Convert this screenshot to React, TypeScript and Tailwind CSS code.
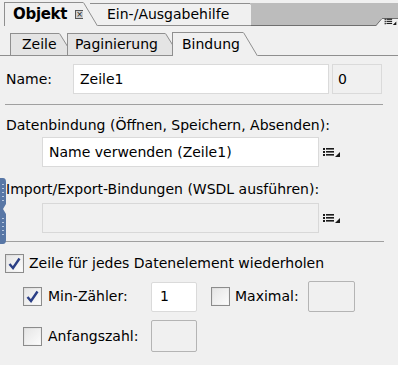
import React from "react";

const ListIcon = () => (
  <svg width="18" height="10" viewBox="0 0 18 10" className="shrink-0">
    <rect x="0" y="1" width="2" height="2" fill="#1a1a1a" />
    <rect x="0" y="4" width="2" height="2" fill="#1a1a1a" />
    <rect x="0" y="7" width="2" height="2" fill="#1a1a1a" />
    <rect x="3" y="1" width="8" height="1.6" fill="#1a1a1a" />
    <rect x="3" y="4" width="8" height="1.6" fill="#1a1a1a" />
    <rect x="3" y="7" width="8" height="1.6" fill="#1a1a1a" />
    <polygon points="17,5 17,10 12,10" fill="#1a1a1a" />
  </svg>
);

const Slant = ({ h, fill, bottom }: { h: number; fill: string; bottom?: boolean }) => (
  <svg width="15" height={h} viewBox={`0 0 15 ${h}`} className="shrink-0 -ml-px">
    <polygon points={`0,0 1,0 15,${h} 0,${h}`} fill={fill} />
    <line x1="0.5" y1="0.5" x2="14.5" y2={h} stroke="#8f8f8f" strokeWidth="1" />
    {bottom && <line x1="0" y1={h - 0.5} x2="15" y2={h - 0.5} stroke="#8f8f8f" />}
  </svg>
);

const Check = ({ checked }: { checked?: boolean }) => (
  <div className="w-[19px] h-[19px] shrink-0 border border-[#8c8c8c] bg-gradient-to-br from-[#dcdcdc] to-[#f8f8f8] flex items-center justify-center">
    <div className="w-[15px] h-[15px] bg-gradient-to-br from-[#e6e6e6] to-[#fbfbfb] flex items-center justify-center">
      {checked && (
        <svg width="13" height="13" viewBox="0 0 13 13">
          <path d="M1.5 7 L5 11 L11.5 1.5" fill="none" stroke="#2b3f86" strokeWidth="2.4" />
        </svg>
      )}
    </div>
  </div>
);

export default function App() {
  return (
    <div className="relative w-[398px] h-[365px] overflow-hidden bg-[#f0f0f0] text-[14px] text-[#000] font-['DejaVu_Sans',sans-serif]">
      {/* main tabs */}
      <div className="flex items-end h-[26px] pt-[2px]">
        <div className="w-[4px] h-full" />
        <div className="relative z-10 flex h-[24px]">
          <div className="w-[80px] flex items-center pl-[8px] border-l border-t border-[#8f8f8f] bg-[#f0f0f0]">
            <span className="font-bold text-[15px] tracking-[-0.3px] w-[62px]">Objekt</span>
            <span className="w-[9px] h-[9px] border border-[#555] bg-[#d0d0d0] flex items-center justify-center text-[8px] leading-none text-[#222]">×</span>
          </div>
          <Slant h={24} fill="#f0f0f0" />
        </div>
        <div className="flex h-[23px] -ml-[8px]">
          <div className="w-[161px] flex items-center pl-[17px] border-t border-b border-[#8f8f8f] bg-[#f0f0f0]">
            <span>Ein-/Ausgabehilfe</span>
          </div>
          <Slant h={23} fill="#f0f0f0" bottom />
        </div>
        <div className="relative flex-1 h-[23px] -ml-[14px]">
          <div className="h-full bg-[#bcbcbc] border-b border-[#707070]" />
          <svg width="22" height="8" viewBox="0 0 22 8" className="absolute right-0 bottom-0">
            <polygon points="6,0 22,0 22,8 0,8" fill="#f0f0f0" />
            <line x1="0" y1="7.5" x2="6" y2="0.5" stroke="#707070" />
            <line x1="6" y1="0.5" x2="22" y2="0.5" stroke="#707070" />
          </svg>
          <div className="absolute right-[1px] bottom-[1px] scale-[0.7] origin-bottom-right">
            <ListIcon />
          </div>
        </div>
      </div>

      {/* sub tabs */}
      <div className="flex items-end h-[30px]">
        <div className="w-[10px] h-px bg-[#8f8f8f]" />
        <div className="flex h-[23px]">
          <div className="w-[50px] flex items-center pl-[11px] border-l border-t border-b border-[#8f8f8f] bg-[#e4e4e4]">Zeile</div>
          <Slant h={23} fill="#e4e4e4" bottom />
        </div>
        <div className="flex h-[23px] -ml-[7px]">
          <div className="w-[99px] flex items-center pl-[7px] border-l border-t border-b border-[#8f8f8f] bg-[#e4e4e4]">Paginierung</div>
          <Slant h={23} fill="#e4e4e4" bottom />
        </div>
        <div className="flex h-[24px] -ml-[8px] z-10">
          <div className="w-[72px] flex items-center pl-[9px] border-l border-t border-[#8f8f8f] bg-[#f0f0f0]">Bindung</div>
          <Slant h={24} fill="#f0f0f0" />
        </div>
        <div className="flex-1 h-px bg-[#8f8f8f]" />
      </div>

      {/* name */}
      <div className="flex items-center mt-[8px] pl-[6px]">
        <span className="w-[67px]">Name:</span>
        <div className="w-[256px] h-[30px] bg-white border border-[#dadada] flex items-center pl-[6px]">Zeile1</div>
        <div className="w-[50px] h-[30px] ml-[3px] bg-[#f0f0f0] border border-[#dadada] flex items-center pl-[5px]">0</div>
      </div>

      <div className="ml-[5px] mt-[10px] w-[378px] h-px bg-[#a0a0a0]" />

      {/* bindings */}
      <div className="pl-[6px] mt-[12px] h-[16px] leading-[16px]">Datenbindung (Öffnen, Speichern, Absenden):</div>
      <div className="flex items-center mt-[4px] pl-[42px] gap-[4px]">
        <div className="w-[277px] h-[30px] bg-white border border-[#dadada] flex items-center pl-[6px]">Name verwenden (Zeile1)</div>
        <ListIcon />
      </div>

      <div className="pl-[6px] mt-[14px] h-[16px] leading-[16px]">Import/Export-Bindungen (WSDL ausführen):</div>
      <div className="flex items-center mt-[6px] pl-[42px] gap-[4px]">
        <div className="w-[277px] h-[30px] bg-[#f0f0f0] border border-[#d8d8d8]" />
        <ListIcon />
      </div>

      <div className="ml-[5px] mt-[8px] w-[379px] h-px bg-[#a0a0a0]" />

      {/* repeat */}
      <div className="flex items-center gap-[5px] pl-[5px] mt-[11px]">
        <Check checked />
        <span>Zeile für jedes Datenelement wiederholen</span>
      </div>

      <div className="flex items-center mt-[7px] pl-[23px]">
        <Check checked />
        <span className="ml-[6px] w-[103px]">Min-Zähler:</span>
        <div className="w-[46px] h-[30px] bg-white border border-[#dadada] rounded-[2px] flex items-center pl-[8px]">1</div>
        <div className="ml-[14px]"><Check /></div>
        <span className="ml-[5px] w-[73px]">Maximal:</span>
        <div className="w-[47px] h-[31px] bg-[#f0f0f0] border border-[#b4b4b4] rounded-[2px]" />
      </div>

      <div className="flex items-center mt-[8px] pl-[23px]">
        <Check />
        <span className="ml-[6px] w-[103px]">Anfangszahl:</span>
        <div className="w-[46px] h-[32px] bg-[#f0f0f0] border border-[#b4b4b4] rounded-[2px]" />
      </div>

      {/* docked side handle */}
      <svg width="7" height="66" viewBox="0 0 7 66" className="absolute left-0 top-[178px]">
        <path d="M0 0 L3 0 Q6 0 6 4 L6 26 L3 31 L6 36 L6 62 Q6 66 3 66 L0 66 Z" fill="#5877a6" />
        {[6, 10, 14, 18, 22, 40, 44, 48, 52, 56].map((y) => (
          <rect key={y} x="2" y={y} width="2" height="1" fill="#b8c8e0" />
        ))}
      </svg>
    </div>
  );
}
